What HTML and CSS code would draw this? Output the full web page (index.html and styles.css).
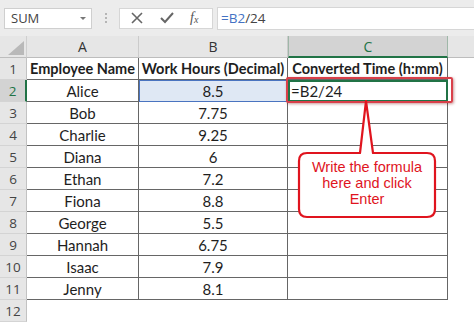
FILE: index.html
```html
<!DOCTYPE html>
<html lang="en">
<head>
    <meta charset="UTF-8">
    <title>Convert decimal hours</title>
    <link rel="stylesheet" href="styles.css">
</head>
<body>
    <div class="formula-bar">
        <div class="name-box">
            <span>SUM</span>
            <svg width="8" height="5" viewBox="0 0 8 5"><path d="M1 1 L4 4 L7 1 Z" fill="#777"/></svg>
        </div>
        <div class="grip"><i></i><i></i><i></i></div>
        <div class="fx-box">
            <svg width="14" height="14" viewBox="0 0 14 14"><path d="M2 2 L12 12 M12 2 L2 12" stroke="#666" stroke-width="1.6"/></svg>
            <svg width="16" height="14" viewBox="0 0 16 14"><path d="M2 7 L6 11 L14 2" stroke="#666" stroke-width="2" fill="none"/></svg>
            <span class="fx">f<sub>x</sub></span>
        </div>
        <div class="formula-input"><span class="ref">=B2</span>/24</div>
    </div>

    <main class="sheet">
        <div class="corner"><svg width="16" height="14" viewBox="0 0 16 14"><path d="M0 14 L16 14 L16 0 Z" fill="#b9b9b9"/></svg></div>
        <div class="col-head">A</div>
        <div class="col-head">B</div>
        <div class="col-head active">C</div>
        <div class="col-head blank"></div>

        <div class="row-head">1</div>
        <div class="cell bold">Employee Name</div>
        <div class="cell bold">Work Hours (Decimal)</div>
        <div class="cell bold">Converted Time (h:mm)</div>
        <div class="pad"></div>

        <div class="row-head active">2</div>
        <div class="cell">Alice</div>
        <div class="cell ref-cell">8.5</div>
        <div class="cell left current">=B2/24</div>
        <div class="pad"></div>

        <div class="row-head">3</div>
        <div class="cell">Bob</div>
        <div class="cell">7.75</div>
        <div class="cell"></div>
        <div class="pad"></div>

        <div class="row-head">4</div>
        <div class="cell">Charlie</div>
        <div class="cell">9.25</div>
        <div class="cell"></div>
        <div class="pad"></div>

        <div class="row-head">5</div>
        <div class="cell">Diana</div>
        <div class="cell">6</div>
        <div class="cell"></div>
        <div class="pad"></div>

        <div class="row-head">6</div>
        <div class="cell">Ethan</div>
        <div class="cell">7.2</div>
        <div class="cell"></div>
        <div class="pad"></div>

        <div class="row-head">7</div>
        <div class="cell">Fiona</div>
        <div class="cell">8.8</div>
        <div class="cell"></div>
        <div class="pad"></div>

        <div class="row-head">8</div>
        <div class="cell">George</div>
        <div class="cell">5.5</div>
        <div class="cell"></div>
        <div class="pad"></div>

        <div class="row-head">9</div>
        <div class="cell">Hannah</div>
        <div class="cell">6.75</div>
        <div class="cell"></div>
        <div class="pad"></div>

        <div class="row-head">10</div>
        <div class="cell">Isaac</div>
        <div class="cell">7.9</div>
        <div class="cell"></div>
        <div class="pad"></div>

        <div class="row-head">11</div>
        <div class="cell">Jenny</div>
        <div class="cell">8.1</div>
        <div class="cell"></div>
        <div class="pad"></div>

        <div class="row-head">12</div>
        <div class="empty"></div>
        <div class="empty"></div>
        <div class="empty"></div>
        <div class="pad"></div>

        <!-- annotation layered over the grid -->
        <div class="highlight-box"></div>
        <div class="callout">
            <svg width="142" height="122" viewBox="0 0 142 122">
                <path d="M11 53 H64 L70 1 L77 53 H131 Q139 53 139 61 V109 Q139 117 131 117 H11 Q3 117 3 109 V61 Q3 53 11 53 Z"
                      fill="#fff" stroke="#e0141e" stroke-width="2.2" stroke-linejoin="round"/>
            </svg>
            <p>Write the formula<br>here and click<br>Enter</p>
        </div>
    </main>
</body>
</html>
```

FILE: styles.css
```css
:root {
    --grid-line: #666;
    --head-bg: #e6e6e6;
    --green: #217346;
}

body {
    margin: 0;
    width: 474px;
    height: 322px;
    overflow: hidden;
    background: #fff;
    font-family: Lato, "Open Sans", sans-serif;
    color: #222;
}

/* ---------- formula bar ---------- */

.formula-bar {
    display: flex;
    align-items: center;
    height: 36px;
    padding: 0 0 0 4px;
    background: #ececec;
    box-sizing: border-box;
}

.name-box {
    display: flex;
    align-items: center;
    justify-content: space-between;
    width: 88px;
    height: 21px;
    padding: 0 4px 0 6px;
    box-sizing: border-box;
    background: #fff;
    border: 1px solid #cfcfcf;
    font-family: "Open Sans", sans-serif;
    font-size: 13px;
    color: #444;
}

.grip {
    display: flex;
    flex-direction: column;
    gap: 2px;
    margin: 0 12px 0 13px;
}

.grip i {
    width: 2px;
    height: 2px;
    background: #b5b5b5;
}

.fx-box {
    display: flex;
    align-items: center;
    justify-content: space-around;
    width: 94px;
    height: 21px;
    padding: 0 6px 0 2px;
    box-sizing: border-box;
    background: #fff;
    border: 1px solid #d6d6d6;
}

.fx {
    font-family: "Liberation Serif", serif;
    font-style: italic;
    font-size: 14px;
    color: #555;
}

.fx sub {
    font-size: 10px;
    vertical-align: -1px;
}

.formula-input {
    flex: 1;
    height: 21px;
    margin-left: 4px;
    padding-left: 3px;
    background: #fff;
    border: 1px solid #d6d6d6;
    border-right: none;
    font-family: "Open Sans", sans-serif;
    font-size: 13.5px;
    line-height: 21px;
    color: #444;
}

.ref {
    color: #4472c4;
}

/* ---------- grid ---------- */

.sheet {
    position: relative;
    display: grid;
    grid-template-columns: 27px 112px 149px 160px 1fr;
    grid-template-rows: 22px repeat(12, 22px);
}

.corner {
    display: flex;
    align-items: flex-end;
    justify-content: flex-end;
    padding: 0 2px 2px 0;
    background: var(--head-bg);
    border-right: 1px solid #cfcfcf;
    border-bottom: 1px solid #bdbdbd;
}

.col-head {
    display: flex;
    align-items: center;
    justify-content: center;
    background: var(--head-bg);
    border-right: 1px solid #cbcbcb;
    border-bottom: 1px solid #bdbdbd;
    font-family: "Open Sans", sans-serif;
    font-size: 14px;
    color: #333;
}

.col-head.active {
    background: #d3d3d3;
    color: var(--green);
    border-bottom: 2px solid var(--green);
    border-left: 1px solid #9fb7a8;
    border-right: 1px solid #9fb7a8;
}

.col-head.blank {
    border-right: none;
}

.row-head {
    display: flex;
    align-items: center;
    justify-content: center;
    background: var(--head-bg);
    border-right: 1px solid #c2c2c2;
    border-bottom: 1px solid #d4d4d4;
    font-family: "Open Sans", sans-serif;
    font-size: 13.5px;
    color: #444;
}

.row-head.active {
    background: #d3d3d3;
    color: var(--green);
    border-right: 2px solid var(--green);
}

.cell {
    display: flex;
    align-items: center;
    justify-content: center;
    border-right: 1.5px solid var(--grid-line);
    border-bottom: 1.5px solid var(--grid-line);
    font-size: 15px;
    color: #1e1e1e;
    white-space: nowrap;
    overflow: hidden;
}

.bold {
    font-weight: 700;
    font-size: 14.5px;
}

.left {
    justify-content: flex-start;
    padding-left: 3px;
}

.ref-cell {
    background: #dfe8f4;
    outline: 1px solid #4a74c0;
    outline-offset: -1px;
}

.current {
    outline: 2px solid var(--green);
    outline-offset: -2px;
}

/* ---------- annotation ---------- */

.highlight-box {
    position: absolute;
    left: 286px;
    top: 41px;
    width: 163px;
    height: 22px;
    border: 2px solid #d9404a;
    border-radius: 2px;
    box-shadow: 1px 1px 3px rgba(120, 0, 0, 0.4);
}

.callout {
    position: absolute;
    left: 296px;
    top: 64px;
    width: 142px;
    height: 122px;
}

.callout svg {
    display: block;
}

.callout p {
    position: absolute;
    top: 59px;
    left: 3px;
    width: 136px;
    margin: 0;
    text-align: center;
    font-family: "Liberation Sans", Arial, sans-serif;
    font-size: 14.5px;
    line-height: 16px;
    color: #e0141e;
}
```
